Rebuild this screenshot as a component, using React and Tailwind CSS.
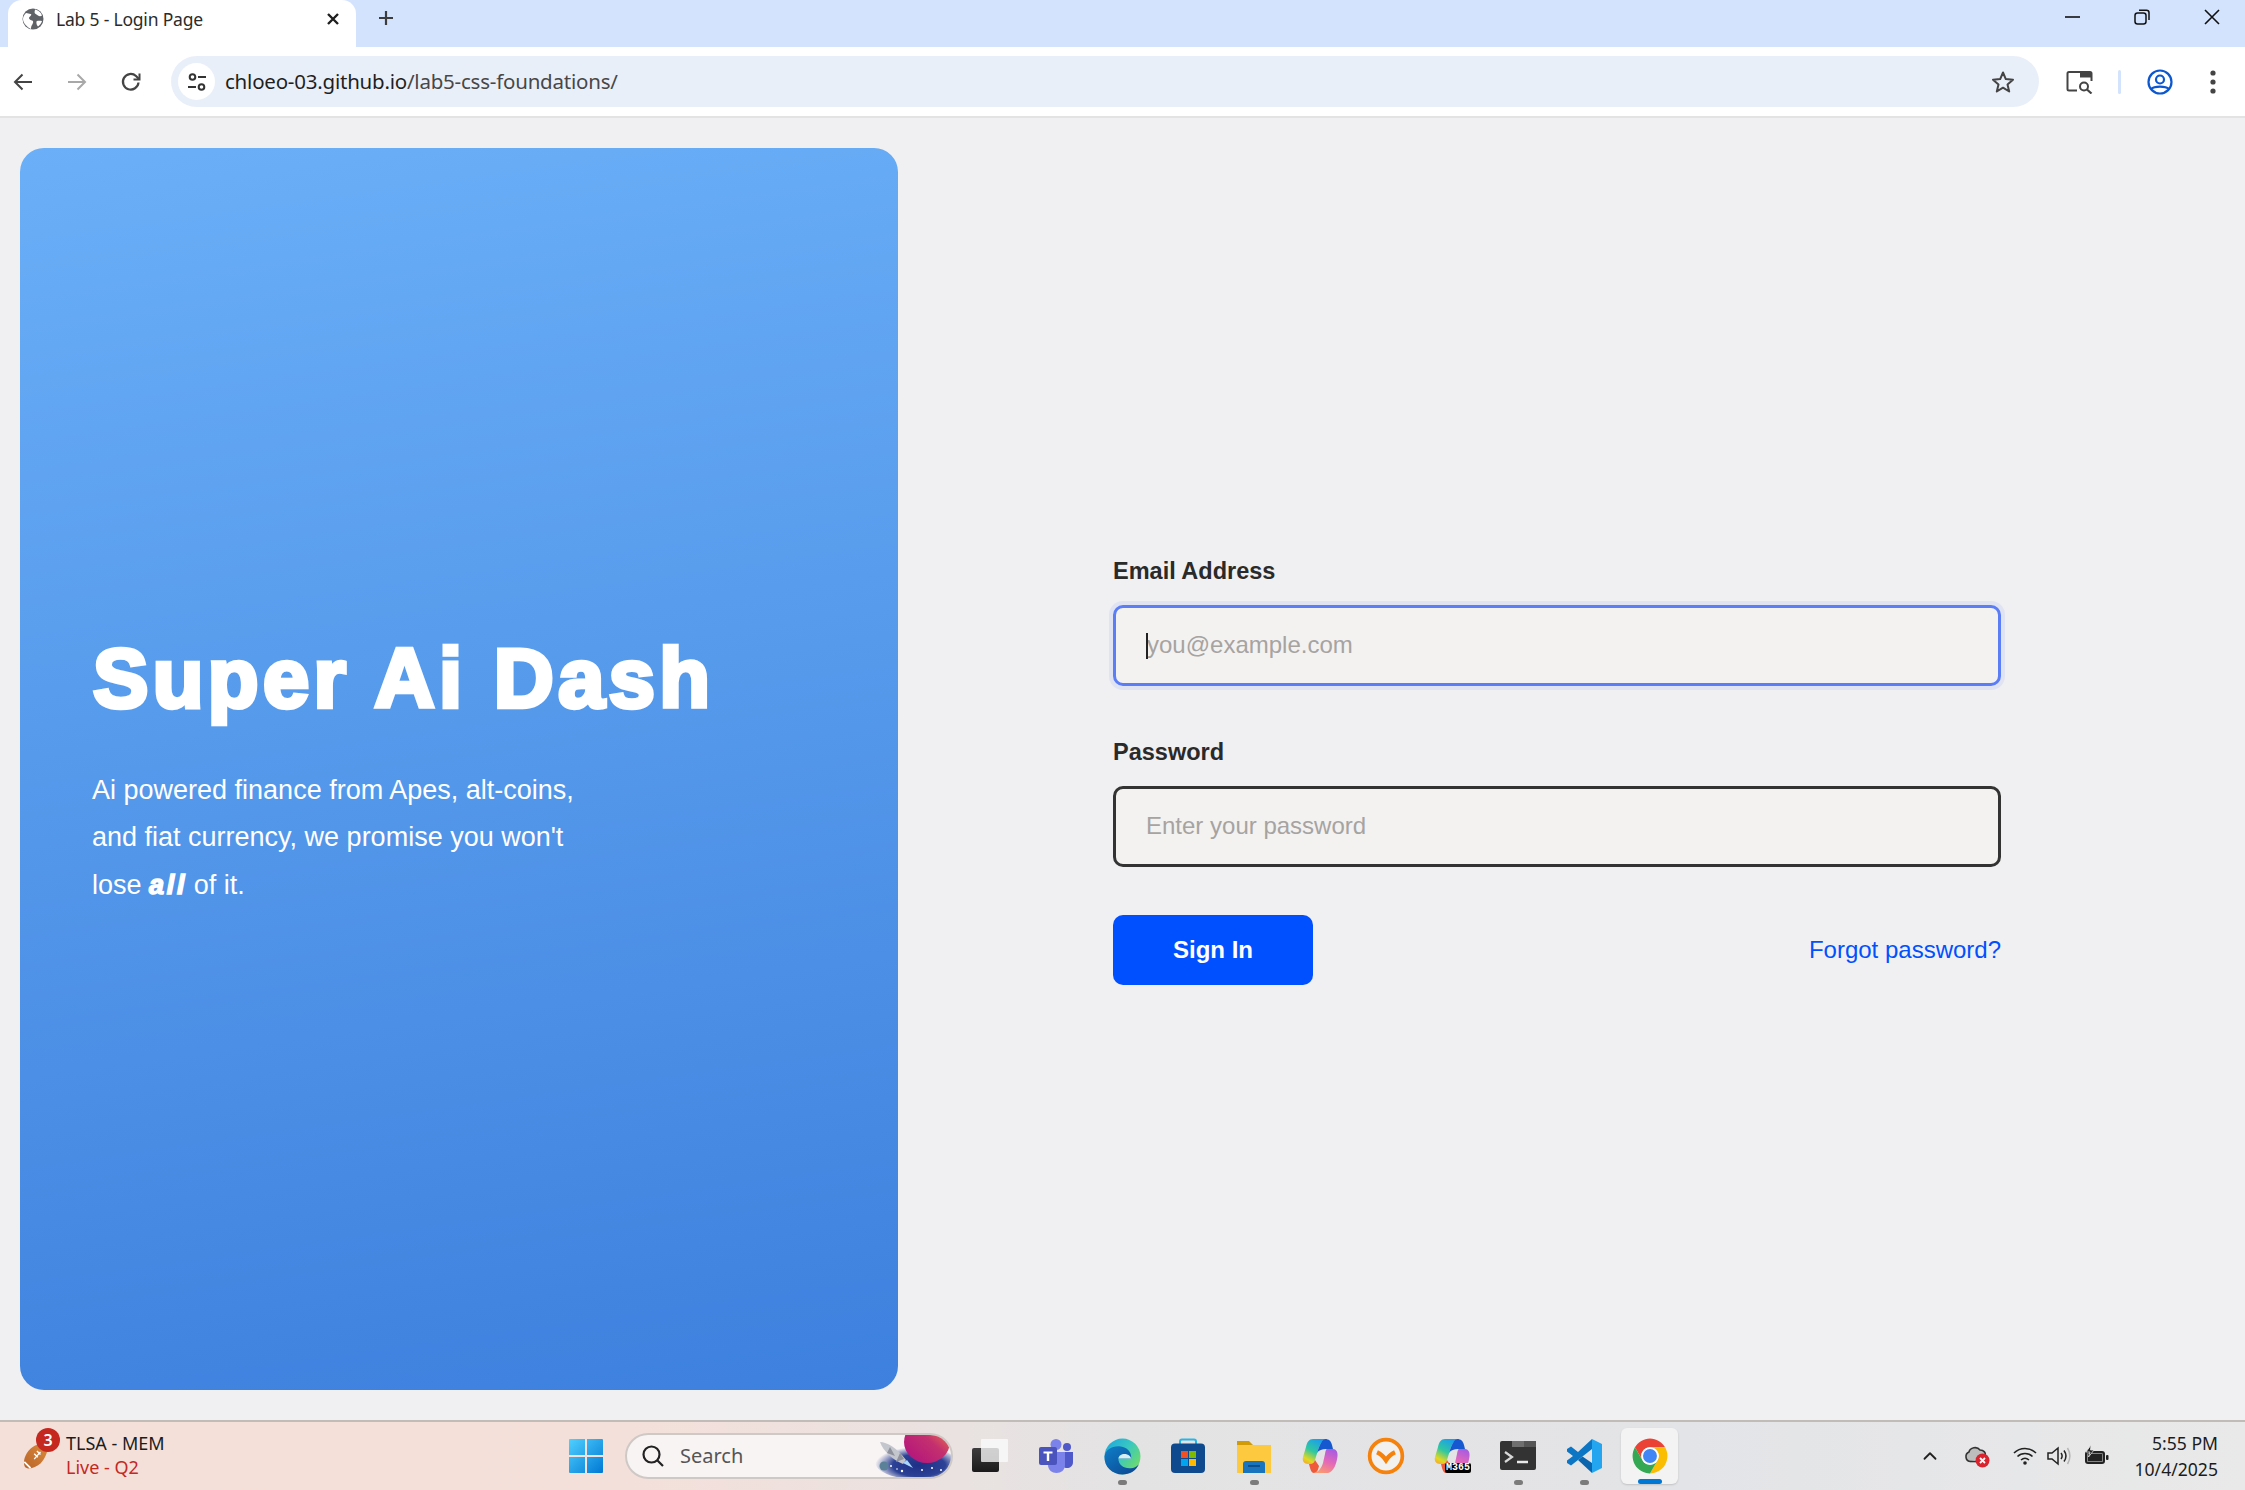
import { ChevronUp } from "lucide-react";

const uiFont = "font-['Noto_Sans',sans-serif]";
const pageFont = "font-['Liberation_Sans',Arial,sans-serif]";

const WindowControls = () => (
  <div className="ml-auto flex h-[34px] items-center self-start">
    <svg className="w-[18px] h-[18px] mr-[52px]" viewBox="0 0 18 18">
      <path d="M2 9H17" stroke="#111" strokeWidth="1.6" />
    </svg>
    <svg className="w-[18px] h-[18px] mr-[52px]" viewBox="0 0 18 18" fill="none" stroke="#111" strokeWidth="1.5">
      <rect x="2" y="5" width="11" height="11" rx="2.5" />
      <path d="M6 2.2H13.5A2.5 2.5 0 0 1 16 4.7V12" />
    </svg>
    <svg className="w-[18px] h-[18px] mr-[24px]" viewBox="0 0 18 18" stroke="#111" strokeWidth="1.6">
      <path d="M2 2L16 16M16 2L2 16" />
    </svg>
  </div>
);

const TabStrip = () => (
  <div className="flex h-[47px] items-start bg-[#d3e3fd] pl-[8px]">
    <div className="flex h-[47px] w-[348px] items-center rounded-t-[14px] bg-white pl-[14px] pr-[16px]">
      <svg className="w-[22px] h-[22px] shrink-0 -mt-[10px]" viewBox="0 0 22 22">
        <circle cx="11" cy="11" r="10.5" fill="#5f6368" />
        <path d="M4 5c2 0 3 1 4.500 1S9 8 7.500 9 8 12 10 12.500s1 3 0 4.500-1 3-1 4C5 19 1 15 1 11c0-2 1-4 3-6zM13 1.500c3 .5 6 3 7 6-1 1-3 1-4 0s-2-1-3-2 0-3 0-4zM15 13c1-.5 3-.5 5 0-.5 2-2 4-4 5.500-1-1-1.500-2-1.500-3s-.5-2 .5-2.500z" fill="#fff" />
      </svg>
      <span className={`${uiFont} ml-[12px] -mt-[8px] text-[17.5px] text-[#2b2b2b] tracking-[-0.2px]`}>Lab 5 - Login Page</span>
      <svg className="ml-auto -mt-[10px] w-[14px] h-[14px]" viewBox="0 0 14 14" stroke="#1f1f1f" strokeWidth="2.400">
        <path d="M2 2L12 12M12 2L2 12" />
      </svg>
    </div>
    <svg className="ml-[21px] mt-[9px] w-[18px] h-[18px]" viewBox="0 0 18 18" stroke="#3c3c3c" strokeWidth="2.200">
      <path d="M9 2V16M2 9H16" />
    </svg>
    <WindowControls />
  </div>
);

const Toolbar = () => (
  <div className="flex h-[71px] items-center border-b-2 border-[#e3e3e3] bg-white pl-[13px] pr-[28px]">
    <svg className="w-[20px] h-[20px]" viewBox="0 0 20 20" fill="none" stroke="#444" strokeWidth="2">
      <path d="M19 10H2M9.500 2.500L2 10l7.500 7.500" />
    </svg>
    <svg className="ml-[34px] w-[20px] h-[20px]" viewBox="0 0 20 20" fill="none" stroke="#a8a8a8" strokeWidth="2">
      <path d="M1 10H18M10.500 2.500L18 10l-7.500 7.500" />
    </svg>
    <svg className="ml-[33px] w-[22px] h-[22px]" viewBox="0 0 22 22" fill="none" stroke="#444" strokeWidth="2.200">
      <path d="M18.500 11.500A7.800 7.800 0 1 1 16 5L19 8" />
      <path d="M19.500 2.500V8.500H13.500" strokeWidth="2" />
    </svg>
    <div className="ml-[29px] flex h-[51px] flex-1 items-center rounded-full bg-[#e9eff9] pl-[7px] pr-[24px]">
      <div className="flex h-[37px] w-[37px] items-center justify-center rounded-full bg-white">
        <svg className="w-[20px] h-[20px]" viewBox="0 0 20 20" fill="none" stroke="#333" strokeWidth="2">
          <circle cx="5.500" cy="5" r="2.800" />
          <circle cx="14.500" cy="15" r="2.800" />
          <path d="M11 5H19M1 15H9" />
        </svg>
      </div>
      <div className={`${uiFont} ml-[10px] text-[20.5px] tracking-[-0.22px]`}>
        <span className="text-[#1f1f1f]">chloeo-03.github.io</span>
        <span className="text-[#474747]">/lab5-css-foundations/</span>
      </div>
      <svg className="ml-auto w-[24px] h-[24px]" viewBox="0 0 24 24" fill="none" stroke="#444" strokeWidth="2" strokeLinejoin="round">
        <path d="M12 2.500L14.800 9.100L22 9.700L16.500 14.400L18.200 21.500L12 17.700L5.800 21.500L7.500 14.400L2 9.700L9.200 9.100Z" />
      </svg>
    </div>
    <svg className="ml-[27px] w-[27px] h-[24px]" viewBox="0 0 27 24">
      <path d="M1.500 3.500A1.500 1.500 0 0 1 3 2H24a1.500 1.500 0 0 1 1.500 1.500V11M11 20.500H3A1.500 1.500 0 0 1 1.500 19V3.500" fill="none" stroke="#444" strokeWidth="2" />
      <path d="M14 2H25.500V7.500H14Z" fill="#444" />
      <circle cx="18" cy="16.500" r="4" fill="none" stroke="#444" strokeWidth="2" />
      <path d="M21 19.500L25.500 23.500" stroke="#444" strokeWidth="2.200" />
    </svg>
    <div className="ml-[25px] h-[24px] w-[3px] rounded-full bg-[#d3e3fd]" />
    <svg className="ml-[26px] w-[26px] h-[26px]" viewBox="0 0 26 26" fill="none" stroke="#0b57d0" strokeWidth="2.200">
      <circle cx="13" cy="13" r="11.500" />
      <circle cx="13" cy="10.500" r="4" />
      <path d="M4.500 20C7 16.800 19 16.800 21.500 20" />
    </svg>
    <svg className="ml-[36px] w-[8px] h-[26px]" viewBox="0 0 8 26" fill="#444">
      <circle cx="4" cy="4" r="2.600" />
      <circle cx="4" cy="13" r="2.600" />
      <circle cx="4" cy="22" r="2.600" />
    </svg>
  </div>
);

const HeroPanel = () => (
  <section className="flex h-[1242px] w-[878px] shrink-0 flex-col justify-center rounded-[24px] bg-[linear-gradient(172deg,#6aaff7_0%,#3d80de_100%)] pl-[72px] text-white">
    <h1 className="ml-[1px] text-[83px] leading-[100px] font-bold tracking-[4.4px] [-webkit-text-stroke:4.500px_white]">Super Ai Dash</h1>
    <p className="mt-[38px] w-[520px] text-[27px] leading-[47.3px]">
      Ai powered finance from Apes, alt-coins, and fiat currency, we promise you won't lose{" "}
      <em className="-mr-[1px] font-bold tracking-[2.7px] [-webkit-text-stroke:1.5px_white]">all</em> of it.
    </p>
  </section>
);

const LoginForm = () => (
  <form className="ml-[215px] w-[888px] text-[#2a2a2a]">
    <label className="block text-[23.5px] leading-[34px] font-bold">Email Address</label>
    <div className="relative mt-[17px]">
      <input
        type="email"
        placeholder="you@example.com"
        className="block h-[81px] w-full rounded-[10px] border-[3px] border-[#5b7df6] bg-[#f3f2f1] pl-[31px] text-[24px] shadow-[0_0_0_4px_rgba(91,125,246,0.1)] outline-none placeholder:text-[#a6a3a1]"
      />
      <span className="absolute left-[33px] top-[28px] h-[26px] w-[2px] bg-[#222]" />
    </div>
    <label className="mt-[49px] block text-[23.5px] leading-[34px] font-bold">Password</label>
    <input
      type="password"
      placeholder="Enter your password"
      className="mt-[17px] block h-[81px] w-full rounded-[10px] border-[3px] border-[#333] bg-[#f3f2f1] pl-[30px] text-[24px] outline-none placeholder:text-[#a6a3a1]"
    />
    <div className="mt-[48px] flex items-center justify-between">
      <button type="button" className="h-[70px] w-[200px] rounded-[10px] bg-[#0050ff] text-[24px] font-bold text-white">
        Sign In
      </button>
      <a className="text-[24px] text-[#0050ff]">Forgot password?</a>
    </div>
  </form>
);

const WinLogo = () => (
  <svg className="w-[36px] h-[36px]" viewBox="0 0 36 36">
    <defs>
      <linearGradient id="win" x1="0" y1="0" x2="1" y2="1">
        <stop offset="0" stopColor="#4fd0ff" />
        <stop offset="1" stopColor="#0078d4" />
      </linearGradient>
    </defs>
    <path d="M2 1H17V17H1V2a1 1 0 0 1 1-1zM19 1H34a1 1 0 0 1 1 1V17H19zM1 19H17V35H2a1 1 0 0 1-1-1zM19 19H35V34a1 1 0 0 1-1 1H19z" fill="url(#win)" />
  </svg>
);

const SearchArt = () => (
  <svg className="absolute right-0 top-0 w-[76px] h-[42px]" viewBox="0 0 76 42">
    <defs>
      <linearGradient id="planet" x1="0" y1="1" x2="1" y2="0">
        <stop offset="0" stopColor="#b00f80" />
        <stop offset="0.55" stopColor="#c4306e" />
        <stop offset="0.85" stopColor="#e8704f" />
        <stop offset="1" stopColor="#b8506a" />
      </linearGradient>
      <radialGradient id="space" cx="0.55" cy="0.6" r="0.55">
        <stop offset="0" stopColor="#1d2f86" />
        <stop offset="0.6" stopColor="#2c4296" />
        <stop offset="1" stopColor="#2c4296" stopOpacity="0" />
      </radialGradient>
      <clipPath id="pillEnd">
        <rect x="-30" y="0" width="106" height="42" rx="21" />
      </clipPath>
    </defs>
    <g clipPath="url(#pillEnd)">
      <ellipse cx="40" cy="27" rx="40" ry="17" fill="url(#space)" />
      <ellipse cx="52" cy="7" rx="23" ry="21" fill="url(#planet)" />
      <circle cx="9" cy="31" r="4.500" fill="#5a8198" />
      <path d="M5 7C12 7 22 13 31 25L28 29C18 25 8 16 5 7Z" fill="#c4c6ce" />
      <path d="M12 18L20 21L15 12ZM21 27L29 24L25 18Z" fill="#8f929c" />
      <path d="M28 28L38 33L32 25Z" fill="#a8d6ff" />
      <g fill="#fff">
        <circle cx="16" cy="31" r="1" />
        <circle cx="27" cy="36" r="1.200" />
        <circle cx="47" cy="35" r="1" />
        <circle cx="57" cy="33" r="1" />
        <circle cx="22" cy="34" r="0.800" />
        <circle cx="66" cy="35" r="1" />
      </g>
    </g>
  </svg>
);

const TaskView = () => (
  <svg className="w-[38px] h-[34px]" viewBox="0 0 38 34">
    <defs>
      <linearGradient id="taskBack" x1="0" y1="0" x2="0" y2="1">
        <stop offset="0" stopColor="#3d3d3d" />
        <stop offset="1" stopColor="#1b1b1b" />
      </linearGradient>
    </defs>
    <rect x="1" y="9" width="27" height="24" rx="2" fill="url(#taskBack)" />
    <rect x="10" y="0" width="27" height="23" rx="1" fill="#fbfbfb" fillOpacity="0.78" />
  </svg>
);

const Teams = () => (
  <svg className="w-[36px] h-[36px]" viewBox="0 0 36 36">
    <circle cx="29" cy="9" r="4" fill="#5059c9" />
    <circle cx="18" cy="6.500" r="5.500" fill="#7b83eb" />
    <path d="M24 14H35V24C35 28 32 30 29 30C26 30 24 28 24 25Z" fill="#5059c9" />
    <path d="M10 14H27V27C27 32 23 35 18.500 35C14 35 10 32 10 27Z" fill="#7b83eb" />
    <rect x="1" y="9" width="18" height="18" rx="2" fill="#4b53bc" />
    <path d="M5.500 13.500H14.500V15.500H11.200V23H8.800V15.500H5.500Z" fill="#fff" />
  </svg>
);

const Edge = () => (
  <svg className="w-[37px] h-[37px]" viewBox="0 0 36 36">
    <defs>
      <linearGradient id="edge" x1="0.1" y1="0" x2="1" y2="0.7">
        <stop offset="0" stopColor="#1fa8dc" />
        <stop offset="0.5" stopColor="#38c8c0" />
        <stop offset="1" stopColor="#6fdc6a" />
      </linearGradient>
      <linearGradient id="edgeBlue" x1="0" y1="0" x2="0.8" y2="1">
        <stop offset="0" stopColor="#0f7fc8" />
        <stop offset="1" stopColor="#0c4a96" />
      </linearGradient>
    </defs>
    <circle cx="18" cy="18" r="17.500" fill="url(#edge)" />
    <path d="M.5 18C1.500 11 8 7.500 15 8C22 8.500 27 13 26.500 20H14C14 26 19 30 26 29.500C29 29.200 31.500 28 34 25.500C31 32 25 35.500 18 35.500C8 35.500 0 28 .5 18Z" fill="url(#edgeBlue)" />
    <path d="M14 20C14.500 15.500 21 14 25 17.500C26 18.500 26.500 20 26.500 20Z" fill="#d8eef2" />
  </svg>
);

const Store = () => (
  <svg className="w-[36px] h-[36px]" viewBox="0 0 36 36">
    <path d="M10 7V3.500A2 2 0 0 1 12 1.500H24A2 2 0 0 1 26 3.500V7" fill="none" stroke="#28b5e6" strokeWidth="2" />
    <rect x="1" y="5.500" width="34" height="29.500" rx="4" fill="#0f4a8f" />
    <rect x="11" y="13" width="7" height="7" fill="#f25022" />
    <rect x="19" y="13" width="7" height="7" fill="#7fba00" />
    <rect x="11" y="21" width="7" height="7" fill="#00a4ef" />
    <rect x="19" y="21" width="7" height="7" fill="#ffb900" />
  </svg>
);

const Explorer = () => (
  <svg className="w-[36px] h-[36px]" viewBox="0 0 36 36">
    <path d="M1 3H13L17 7H35V12H1Z" fill="#d19b06" />
    <path d="M1 7H35V35H1Z" fill="#fdc93f" />
    <path d="M7 35V26A3 3 0 0 1 10 23H26A3 3 0 0 1 29 26V35Z" fill="#1a73bd" />
    <path d="M12 28H24" stroke="#0d4f8a" strokeWidth="2" />
  </svg>
);

const CopilotShape = ({ id }) => (
  <svg className="w-[36px] h-[36px]" viewBox="0 0 36 36">
    <defs>
      <linearGradient id={`${id}a`} x1="0.7" y1="0" x2="0.2" y2="1">
        <stop offset="0" stopColor="#1b9cf0" />
        <stop offset="0.5" stopColor="#30c8a0" />
        <stop offset="0.85" stopColor="#e4d820" />
        <stop offset="1" stopColor="#f0b030" />
      </linearGradient>
      <linearGradient id={`${id}b`} x1="0.7" y1="0" x2="0.3" y2="1">
        <stop offset="0" stopColor="#a85ce0" />
        <stop offset="0.5" stopColor="#e468b8" />
        <stop offset="1" stopColor="#fb9a70" />
      </linearGradient>
    </defs>
    <path d="M11 1H24C20 2 18 6 16 12L13 22C12 25 9 26 6 26C2 26 0 23 1 19L4 9C5 4 7 1 11 1Z" fill={`url(#${id}a)`} />
    <path d="M7 26C10 26 12 25 13 22L17 28C16 32 15 35 12 35C9 35 8 30 7 26Z" fill="#ee5a3a" />
    <path d="M23 1C20 2 18 6 16 12L15 15C17 12 20 11 24 11H31L30 7C29 3 27 1 23 1Z" fill="#1658cf" />
    <path d="M25 11H31C34 11 36 14 35.500 18C35 24 32 34 26 35H12C16.500 34 19.500 30 21 25L23 16C23.500 13 24 11 25 11Z" fill={`url(#${id}b)`} />
  </svg>
);

const OrangeRing = () => (
  <svg className="w-[38px] h-[38px]" viewBox="0 0 36 36" fill="none" stroke="#f5820d">
    <circle cx="18" cy="18" r="15.500" strokeWidth="3.500" fill="#f3f1ef" />
    <path d="M9.500 14.500C13 16 16 19 18 22C20 19 23 16 26.500 14.500" strokeWidth="4.200" />
  </svg>
);

const Terminal = () => (
  <svg className="w-[36px] h-[36px]" viewBox="0 0 36 36">
    <rect x="0" y="3" width="36" height="29" rx="2" fill="#333" />
    <rect x="12" y="3" width="12" height="6" fill="#6f6f6f" />
    <rect x="24" y="3" width="12" height="6" fill="#555" />
    <path d="M5 14L12 19L5 24" fill="none" stroke="#d8d8d8" strokeWidth="2.200" />
    <path d="M17 24H28" stroke="#e8e8e8" strokeWidth="2.500" />
  </svg>
);

const VSCode = () => (
  <svg className="w-[36px] h-[36px]" viewBox="0 0 36 36">
    <path d="M26 1L36 6V30L26 35Z" fill="#24a5f0" />
    <path d="M26 1V11L12 22L5 27.500L1 25V22.500L7 18L1 13.500V11L5 8.500L12 14Z" fill="#0d76c4" />
    <path d="M26 25V35L12 22L16.500 18.500Z" fill="#0a65ae" />
  </svg>
);

const ChromeLogo = () => (
  <svg className="w-[38px] h-[38px]" viewBox="0 0 48 48">
    <path d="M4.950 13A22 22 0 0 1 43.050 13H24A11 11 0 0 0 14.470 29.500Z" fill="#ea4335" />
    <path d="M43.050 13H24A11 11 0 0 1 33.530 29.500L24 46A22 22 0 0 0 43.050 13Z" fill="#fbbc04" />
    <path d="M4.950 13L14.470 29.500A11 11 0 0 0 33.530 29.500L24 46A22 22 0 0 1 4.950 13Z" fill="#34a853" />
    <circle cx="24" cy="24" r="11" fill="#fff" />
    <circle cx="24" cy="24" r="8.800" fill="#4285f4" />
  </svg>
);

const Slot = ({ children, dot }) => (
  <div className="relative flex h-[68px] w-[66px] items-center justify-center">
    {children}
    {dot && <span className="absolute bottom-[5px] h-[5px] w-[9px] rounded-full bg-[#7b7b7b]" />}
  </div>
);

const Tray = () => (
  <div className="ml-auto flex items-center pr-[27px]">
    <ChevronUp className="w-[22px] h-[22px] text-[#222]" strokeWidth={2} />
    <svg className="ml-[23px] w-[26px] h-[24px]" viewBox="0 0 26 24">
      <path d="M6 17.500A5 5 0 0 1 5 8C6 3.500 13 2 16 6C20 6 22 9 21.500 12" fill="#bdbdbd" stroke="#333" strokeWidth="1.600" />
      <path d="M6 17.500H12" stroke="#333" strokeWidth="1.600" />
      <circle cx="18.500" cy="16.500" r="7" fill="#d9232e" />
      <path d="M16 14L21 19M21 14L16 19" stroke="#fff" strokeWidth="1.800" />
    </svg>
    <svg className="ml-[23px] w-[24px] h-[20px]" viewBox="0 0 24 20" fill="none" stroke="#222" strokeWidth="1.600">
      <path d="M1 7C7 1 17 1 23 7M4.500 10.500C8.500 6.500 15.500 6.500 19.500 10.500M8 14C10.500 11.800 13.500 11.800 16 14" />
      <circle cx="12" cy="17" r="1.800" fill="#222" stroke="none" />
    </svg>
    <svg className="ml-[10px] w-[24px] h-[22px]" viewBox="0 0 24 22" fill="none" stroke="#222" strokeWidth="1.500">
      <path d="M1 8H5L11 3V19L5 14H1Z" />
      <path d="M14 8C15.500 10 15.500 12 14 14M17 5.500C19.500 9 19.500 13 17 16.500" />
      <path d="M20.500 3C23.500 8 23.500 14 20.500 19" stroke="#b5b5b5" />
    </svg>
    <svg className="ml-[13px] w-[25px] h-[22px]" viewBox="0 0 25 22">
      <rect x="1" y="6" width="20" height="13" rx="3" fill="#222" />
      <rect x="3" y="8" width="16" height="9" rx="1.500" fill="#e8e8e8" />
      <rect x="3.500" y="8.500" width="15" height="8" fill="#222" />
      <rect x="22" y="10" width="2.500" height="5" rx="1" fill="#222" />
      <path d="M7 0L2 7H6L4.500 12L10 5H6.500Z" fill="#222" stroke="#e8e8e8" strokeWidth="0.800" />
    </svg>
    <div className={`${uiFont} ml-[25px] text-right text-[17.6px] leading-[26px] text-[#1c1c1c]`}>
      <div>5:55 PM</div>
      <div>10/4/2025</div>
    </div>
  </div>
);

const Taskbar = () => (
  <footer className="flex h-[70px] items-center border-t-2 border-[#c2bcb8] bg-[linear-gradient(90deg,#f4e0d9_0%,#f4e0da_28%,#e4e3e4_50%,#e3e4e7_75%,#e9e9e9_100%)]">
    {/* score widget */}
    <div className="flex w-[553px] items-center pl-[20px]">
      <div className="relative h-[44px] w-[40px]">
        <svg className="absolute left-[2px] top-[8px] w-[28px] h-[27px]" viewBox="0 0 30 30">
          <defs>
            <linearGradient id="ball" x1="0" y1="1" x2="1" y2="0">
              <stop offset="0" stopColor="#b9652a" />
              <stop offset="1" stopColor="#dc8a3c" />
            </linearGradient>
          </defs>
          <path d="M3 28C-1 22 4 9 14 4C20 1 26 1 28 3C29 8 26 18 20 24C14 29 7 31 3 28Z" fill="url(#ball)" />
          <path d="M2 22L9 29" stroke="#fff" strokeWidth="2" />
          <path d="M13 19L20 11M13 13L17 17M16 10L20 14" stroke="#fff" strokeWidth="1.500" />
        </svg>
        <span className="absolute left-[16px] -top-[6px] flex h-[24px] w-[24px] items-center justify-center rounded-full bg-[#c4281f] text-[16px] leading-none font-semibold text-white">3</span>
      </div>
      <div className={`${uiFont} ml-[6px] -mt-[2px] text-[18px] leading-[24px]`}>
        <div className="text-[#1c1c1c]">TLSA - MEM</div>
        <div className="text-[#c4281f]">Live - Q2</div>
      </div>
    </div>

    <div className="flex w-[66px] justify-center">
      <WinLogo />
    </div>
    <div className="relative ml-[6px] flex h-[46px] w-[328px] items-center rounded-full border-2 border-[#cfc9c6] bg-[#f8f4f3] pl-[14px]">
      <svg className="w-[24px] h-[24px]" viewBox="0 0 24 24" fill="none" stroke="#222" strokeWidth="2.200">
        <circle cx="10.500" cy="10.500" r="8" />
        <path d="M16.500 16.500L22 22" />
      </svg>
      <span className={`${uiFont} ml-[15px] text-[20px] text-[#555]`}>Search</span>
      <SearchArt />
    </div>

    <div className="ml-[4px] flex items-center">
      <Slot><TaskView /></Slot>
      <Slot><Teams /></Slot>
      <Slot dot><Edge /></Slot>
      <Slot><Store /></Slot>
      <Slot dot><Explorer /></Slot>
      <Slot><CopilotShape id="cop" /></Slot>
      <Slot><OrangeRing /></Slot>
      <Slot>
        <CopilotShape id="m365" />
        <span className="absolute left-[26px] top-[41px] rounded-[2px] bg-black px-[1px] font-['Liberation_Mono',monospace] text-[10px] leading-[10px] font-bold text-white">M365</span>
      </Slot>
      <Slot dot><Terminal /></Slot>
      <Slot dot><VSCode /></Slot>
      <div className="relative ml-[4px] flex h-[56px] w-[57px] items-center justify-center rounded-[6px] bg-[#f3f3f4] shadow-[0_1px_2px_rgba(0,0,0,0.15)]">
        <ChromeLogo />
        <span className="absolute bottom-0 h-[5px] w-[24px] rounded-full bg-[#0078d4]" />
      </div>
    </div>
    <Tray />
  </footer>
);

export default function App() {
  return (
    <div className="flex h-[1490px] w-[2245px] flex-col overflow-hidden bg-[#f0f0f2]">
      <TabStrip />
      <Toolbar />
      <main className={`${pageFont} flex flex-1 items-center pl-[20px]`}>
        <HeroPanel />
        <LoginForm />
      </main>
      <Taskbar />
    </div>
  );
}
